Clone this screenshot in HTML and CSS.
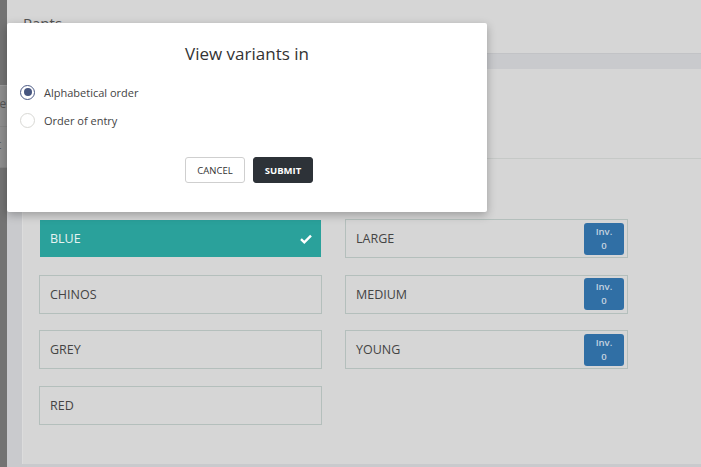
FILE: index.html
```html
<!DOCTYPE html>
<html>
<head>
<meta charset="utf-8">
<link rel="stylesheet" href="styles.css">
</head>
<body>
<div class="app">
  <aside class="sidebar">
    <div class="side-panel">
      <div class="side-item">order</div>
      <div class="side-item">edit</div>
    </div>
  </aside>
  <main class="main">
    <header class="page-header">Pants</header>
    <section class="card">
      <div class="card-top"></div>
      <div class="variants">
        <div class="tile tile-active"><span>BLUE</span>
          <svg class="check" width="12" height="10" viewBox="0 0 12 10"><path d="M1 5.2 L4.3 8.3 L11 1.6" fill="none" stroke="#fff" stroke-width="2.4"/></svg>
        </div>
        <div class="tile"><span>LARGE</span><div class="inv">Inv.<br>0</div></div>
        <div class="tile"><span>CHINOS</span></div>
        <div class="tile"><span>MEDIUM</span><div class="inv">Inv.<br>0</div></div>
        <div class="tile"><span>GREY</span></div>
        <div class="tile"><span>YOUNG</span><div class="inv">Inv.<br>0</div></div>
        <div class="tile"><span>RED</span></div>
      </div>
    </section>
  </main>
</div>

<div class="dialog">
  <h2 class="dialog-title">View variants in</h2>
  <div class="options">
    <label class="option"><span class="radio radio-on"></span>Alphabetical order</label>
    <label class="option"><span class="radio"></span>Order of entry</label>
  </div>
  <div class="actions">
    <button class="btn btn-cancel">CANCEL</button>
    <button class="btn btn-submit">SUBMIT</button>
  </div>
</div>
</body>
</html>
```

FILE: styles.css
```css
* { box-sizing: border-box; }
html, body { margin: 0; padding: 0; }
body {
  width: 701px;
  height: 467px;
  overflow: hidden;
  font-family: "Open Sans", "Noto Sans", sans-serif;
  background: #c9cacd;
  position: relative;
}
.app { display: flex; height: 467px; }
.sidebar {
  width: 7px;
  flex: none;
  background: #737373;
  overflow: hidden;
  padding-top: 85px;
}
.side-panel {
  background: #8e8e8e;
  height: 82px;
  border-top: 1px solid #9a9a9a;
}
.side-item {
  font-size: 12px;
  color: #555;
  height: 41px;
  line-height: 36px;
  margin-left: -20px;
  white-space: nowrap;
  border-bottom: 1px solid #858585;
}
.main {
  flex: 1;
  display: flex;
  flex-direction: column;
  background: #c9cacd;
}
.page-header {
  height: 54px;
  background: #d6d6d6;
  border-bottom: 1px solid #c2c3c6;
  padding: 13px 0 0 16px;
  font-size: 15px;
  color: #555;
  flex: none;
}
.card {
  margin: 15px 0 3px 15px;
  flex: 1;
  background: #d6d6d6;
  border-left: 1px solid #dcdcdc;
  padding-left: 16px;
}
.card-top {
  height: 90px;
  border-bottom: 1px solid #c6c9c7;
  margin-left: -17px;
}
.variants {
  margin-top: 60px;
  display: grid;
  grid-template-columns: 283px 283px;
  column-gap: 23px;
  row-gap: 16.5px;
  grid-auto-rows: 39px;
}
.tile {
  border: 1px solid #b4bfbc;
  display: flex;
  align-items: center;
  justify-content: space-between;
  padding: 0 3px 0 10px;
  font-size: 12.5px;
  color: #444;
}
.tile-active {
  background: #2aa19b;
  background-clip: padding-box;
  border-color: transparent;
  color: #e6f3f2;
  padding-right: 9px;
}
.check { display: block; }
.inv {
  width: 40px;
  height: 32px;
  background: #306fa5;
  border-radius: 3px;
  color: #c6d3e0;
  font-size: 9.5px;
  font-weight: 600;
  line-height: 14px;
  text-align: center;
  padding-top: 2px;
}
.dialog {
  position: absolute;
  left: 7px;
  top: 23px;
  width: 480px;
  height: 189px;
  background: #fff;
  border-radius: 2px;
  box-shadow: 0 3px 10px rgba(0, 0, 0, 0.28);
  padding: 19px 13px 0 13px;
}
.dialog-title {
  margin: 0;
  text-align: center;
  font-size: 17px;
  font-weight: 400;
  color: #333;
  line-height: 24px;
}
.options {
  margin-top: 18px;
  display: flex;
  flex-direction: column;
  gap: 12px;
}
.option {
  display: flex;
  align-items: center;
  gap: 9px;
  font-size: 11px;
  color: #444;
  height: 16px;
}
.radio {
  width: 15px;
  height: 15px;
  border-radius: 50%;
  border: 1px solid #d8d8d4;
  flex: none;
  display: flex;
  align-items: center;
  justify-content: center;
}
.radio-on {
  border: 1.5px solid #4b5985;
}
.radio-on::after {
  content: "";
  width: 8px;
  height: 8px;
  border-radius: 50%;
  background: #46557f;
}
.actions {
  margin-top: 29px;
  display: flex;
  justify-content: center;
  gap: 8px;
  padding-left: 4px;
}
.btn {
  width: 60px;
  height: 26px;
  border-radius: 3px;
  font-family: "Open Sans", "Noto Sans", sans-serif;
  font-size: 9.5px;
  padding: 0;
  cursor: pointer;
}
.btn-cancel {
  background: #fff;
  border: 1px solid #cfcfcf;
  color: #333;
}
.btn-submit {
  background: #2d3238;
  border: 1px solid #2d3238;
  color: #fff;
  font-weight: 700;
}
```
